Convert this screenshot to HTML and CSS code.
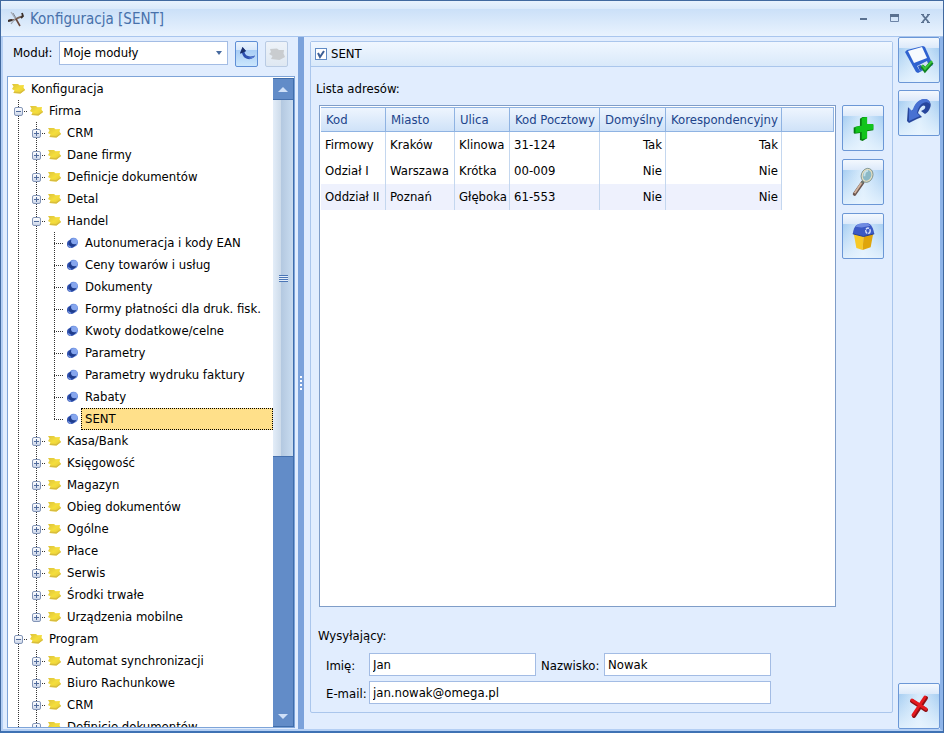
FILE: index.html
```html
<!DOCTYPE html>
<html lang="pl">
<head>
    <meta charset="UTF-8">
    <meta name="viewport" content="width=device-width, initial-scale=1.0">
    <title>Konfiguracja [SENT]</title>
    <link rel="stylesheet" href="styles.css">
</head>
<body>
    <!-- Shared icons -->
    <svg class="sprite" aria-hidden="true">
        <defs>
            <linearGradient id="gold" x1="0" y1="0" x2="1" y2="1">
                <stop offset="0" stop-color="#dcc23c"/>
                <stop offset="0.5" stop-color="#f5de3c"/>
                <stop offset="1" stop-color="#e3c93a"/>
            </linearGradient>
        </defs>
        <symbol id="folder" viewBox="0 0 13 12">
            <path d="M0 1 L6 1 L7.500 2.200 L12 2 L11.500 4.500 L13 7 L8.500 10.500 L1.500 10 L2.500 7.500 L0 6 L1.500 3.500Z" fill="url(#gold)"/>
            <path d="M1.500 10 L8.500 10.500 L13 7 L12.500 6.300 L8 9 L2.200 8.600Z" fill="#d8bd3e"/>
        </symbol>
        <symbol id="leaf" viewBox="0 0 13 12">
            <ellipse cx="7.500" cy="5.200" rx="4.500" ry="4.500" fill="#6488da"/>
            <ellipse cx="5" cy="7" rx="4" ry="4" fill="#2d4fae"/>
            <ellipse cx="6.500" cy="6.300" rx="3.500" ry="3.300" fill="#1f3c8c"/>
            <ellipse cx="8.300" cy="4.200" rx="3.200" ry="3" fill="#86a6ee"/>
            <path d="M2 8.500 L5 10.500" stroke="#7d9de6" stroke-width="1.200"/>
        </symbol>
    </svg>

    <div class="window">
        <header class="titlebar">
            <svg class="app-icon" viewBox="0 0 16 16">
                <path d="M0 10 C3 8 5 10 8 8 S13 6 15 5" fill="none" stroke="#7a6459" stroke-width="1.800"/>
                <path d="M0 10 L4 9" stroke="#3a2e2a" stroke-width="2"/>
                <path d="M3 1 L7 7" stroke="#a5abb6" stroke-width="1.300"/>
                <path d="M5 2 L8 7" stroke="#7f8794" stroke-width="1"/>
                <path d="M8 8 L12 15" stroke="#6a473b" stroke-width="1.600"/>
                <path d="M7 8 L3 13" stroke="#9aa2ae" stroke-width="1.200"/>
                <path d="M14 2 L15 5 L13 7" fill="none" stroke="#3b2f2b" stroke-width="1.800"/>
            </svg>
            <h1>Konfiguracja [SENT]</h1>
            <div class="window-buttons">
                <button type="button" aria-label="Minimalizuj">
                    <svg viewBox="0 0 9 9"><path d="M1 5H8" stroke="#5a7190" stroke-width="2"/></svg>
                </button>
                <button type="button" aria-label="Maksymalizuj">
                    <svg viewBox="0 0 9 9"><path d="M0.5 1V7.5H8.5V1" fill="none" stroke="#6d84a6"/><path d="M0 1.500H9" stroke="#5a7190" stroke-width="3"/></svg>
                </button>
                <button type="button" aria-label="Zamknij okno">
                    <svg viewBox="0 0 9 9"><path d="M1.5 1L7.5 8M7.5 1L1.5 8" stroke="#5a7190" stroke-width="1.800"/><path d="M0 0.5H3M6 0.5H9M0 8.5H3M6 8.5H9" stroke="#5a7190"/></svg>
                </button>
            </div>
        </header>

        <div class="client">
            <aside class="sidebar">
                <div class="module-bar">
                    <label for="module">Moduł:</label>
                    <select id="module">
                        <option>Moje moduły</option>
                    </select>
                    <button type="button" class="small-button" aria-label="Cofnij">
                        <svg viewBox="0 0 18 18">
                            <path d="M4.500 2 L8 6 L6.500 7 C7 11 11 12.500 17 10.500 C16 15 6 16.500 4 8 L2 8.500Z" fill="#2d4fae"/>
                            <path d="M4.500 2 L8 6 L6 7 L4 8 L2 8.500Z" fill="#1c2f68"/>
                            <path d="M7 11 C10 13.500 13 13 17 10.500 C16 12.500 14 13.500 12 13.800Z" fill="#5c82da"/>
                        </svg>
                    </button>
                    <button type="button" class="small-button disabled" aria-label="Otwórz" disabled>
                        <svg viewBox="0 0 18 18"><path d="M2 4 L9 3.500 L11 5 L16 5 L15.500 8.500 L17 12 L11.500 15 L3 14 L4.500 11 L1 9 L3 7Z" fill="#c9cccf"/></svg>
                    </button>
                </div>

                <div class="tree-box">
                    <nav class="tree">
                        <div class="row root"><svg class="node"><use href="#folder"/></svg><span class="text">Konfiguracja</span></div>
                        <ul class="top">
                            <li class="through">
                                <div class="row"><i class="box minus"></i><svg class="node"><use href="#folder"/></svg><span class="text">Firma</span></div>
                                <ul>
                                    <li><div class="row"><i class="box"></i><svg class="node"><use href="#folder"/></svg><span class="text">CRM</span></div></li>
                                    <li><div class="row"><i class="box"></i><svg class="node"><use href="#folder"/></svg><span class="text">Dane firmy</span></div></li>
                                    <li><div class="row"><i class="box"></i><svg class="node"><use href="#folder"/></svg><span class="text">Definicje dokumentów</span></div></li>
                                    <li><div class="row"><i class="box"></i><svg class="node"><use href="#folder"/></svg><span class="text">Detal</span></div></li>
                                    <li>
                                        <div class="row"><i class="box minus"></i><svg class="node"><use href="#folder"/></svg><span class="text">Handel</span></div>
                                        <ul>
                                            <li><div class="row"><i class="dots"></i><svg class="node"><use href="#leaf"/></svg><span class="text">Autonumeracja i kody EAN</span></div></li>
                                            <li><div class="row"><i class="dots"></i><svg class="node"><use href="#leaf"/></svg><span class="text">Ceny towarów i usług</span></div></li>
                                            <li><div class="row"><i class="dots"></i><svg class="node"><use href="#leaf"/></svg><span class="text">Dokumenty</span></div></li>
                                            <li><div class="row"><i class="dots"></i><svg class="node"><use href="#leaf"/></svg><span class="text">Formy płatności dla druk. fisk.</span></div></li>
                                            <li><div class="row"><i class="dots"></i><svg class="node"><use href="#leaf"/></svg><span class="text">Kwoty dodatkowe/celne</span></div></li>
                                            <li><div class="row"><i class="dots"></i><svg class="node"><use href="#leaf"/></svg><span class="text">Parametry</span></div></li>
                                            <li><div class="row"><i class="dots"></i><svg class="node"><use href="#leaf"/></svg><span class="text">Parametry wydruku faktury</span></div></li>
                                            <li><div class="row"><i class="dots"></i><svg class="node"><use href="#leaf"/></svg><span class="text">Rabaty</span></div></li>
                                            <li><div class="row"><i class="dots"></i><svg class="node"><use href="#leaf"/></svg><span class="text selected">SENT</span></div></li>
                                        </ul>
                                    </li>
                                    <li><div class="row"><i class="box"></i><svg class="node"><use href="#folder"/></svg><span class="text">Kasa/Bank</span></div></li>
                                    <li><div class="row"><i class="box"></i><svg class="node"><use href="#folder"/></svg><span class="text">Księgowość</span></div></li>
                                    <li><div class="row"><i class="box"></i><svg class="node"><use href="#folder"/></svg><span class="text">Magazyn</span></div></li>
                                    <li><div class="row"><i class="box"></i><svg class="node"><use href="#folder"/></svg><span class="text">Obieg dokumentów</span></div></li>
                                    <li><div class="row"><i class="box"></i><svg class="node"><use href="#folder"/></svg><span class="text">Ogólne</span></div></li>
                                    <li><div class="row"><i class="box"></i><svg class="node"><use href="#folder"/></svg><span class="text">Płace</span></div></li>
                                    <li><div class="row"><i class="box"></i><svg class="node"><use href="#folder"/></svg><span class="text">Serwis</span></div></li>
                                    <li><div class="row"><i class="box"></i><svg class="node"><use href="#folder"/></svg><span class="text">Środki trwałe</span></div></li>
                                    <li><div class="row"><i class="box"></i><svg class="node"><use href="#folder"/></svg><span class="text">Urządzenia mobilne</span></div></li>
                                </ul>
                            </li>
                            <li class="through">
                                <div class="row"><i class="box minus"></i><svg class="node"><use href="#folder"/></svg><span class="text">Program</span></div>
                                <ul>
                                    <li><div class="row"><i class="box"></i><svg class="node"><use href="#folder"/></svg><span class="text">Automat synchronizacji</span></div></li>
                                    <li><div class="row"><i class="box"></i><svg class="node"><use href="#folder"/></svg><span class="text">Biuro Rachunkowe</span></div></li>
                                    <li><div class="row"><i class="box"></i><svg class="node"><use href="#folder"/></svg><span class="text">CRM</span></div></li>
                                    <li><div class="row"><i class="box"></i><svg class="node"><use href="#folder"/></svg><span class="text">Definicje dokumentów</span></div></li>
                                </ul>
                            </li>
                        </ul>
                    </nav>
                    <div class="scrollbar">
                        <button type="button" aria-label="W górę"><svg viewBox="0 0 10 5"><path d="M0 5L5 0L10 5Z" fill="#cfe0f8"/></svg></button>
                        <div class="track"><div class="thumb"><i class="grip"></i></div></div>
                        <button type="button" aria-label="W dół"><svg viewBox="0 0 10 5"><path d="M0 0L5 5L10 0Z" fill="#cfe0f8"/></svg></button>
                    </div>
                </div>
            </aside>

            <div class="splitter"><i></i><i></i><i></i><i></i></div>

            <main class="panel">
                <div class="panel-head">
                    <input type="checkbox" id="sent" checked>
                    <label for="sent">SENT</label>
                </div>
                <div class="panel-body">
                    <p class="caption">Lista adresów:</p>
                    <div class="addresses">
                        <div class="grid">
                            <table>
                                <colgroup>
                                    <col class="c-code"><col class="c-city"><col class="c-street"><col class="c-zip"><col class="c-default"><col class="c-mail"><col>
                                </colgroup>
                                <thead>
                                    <tr><th>Kod</th><th>Miasto</th><th>Ulica</th><th>Kod Pocztowy</th><th>Domyślny</th><th>Korespondencyjny</th><th></th></tr>
                                </thead>
                                <tbody>
                                    <tr><td>Firmowy</td><td>Kraków</td><td>Klinowa</td><td>31-124</td><td class="flag">Tak</td><td class="flag">Tak</td><td></td></tr>
                                    <tr><td>Odział I</td><td>Warszawa</td><td>Krótka</td><td>00-009</td><td class="flag">Nie</td><td class="flag">Nie</td><td></td></tr>
                                    <tr class="current"><td>Oddział II</td><td>Poznań</td><td>Głęboka</td><td>61-553</td><td class="flag">Nie</td><td class="flag">Nie</td><td></td></tr>
                                </tbody>
                            </table>
                        </div>
                        <div class="actions">
                            <button type="button" class="tool" aria-label="Dodaj">
                                <svg viewBox="0 0 28 28">
                                    <path d="M10 3L13 1L18 1L18 9L24 9L25 10L25 16L18 17L18 25L13 28L10 27L10 19L4 20L3 19L3 13L10 11Z" fill="#087c12"/>
                                    <path d="M12 2L18 1L18 9L25 9L25 15L18 16L18 25L12 26L12 18L5 19L5 12L12 11Z" fill="#12c41c"/>
                                </svg>
                            </button>
                            <button type="button" class="tool" aria-label="Podgląd">
                                <svg viewBox="0 0 28 28">
                                    <path d="M4 27L13 14" stroke="#6b5650" stroke-width="4" stroke-linecap="round"/>
                                    <path d="M4 26L12 14" stroke="#d3b49f" stroke-width="2"/>
                                    <path d="M12 15L15 11" stroke="#6e7a72" stroke-width="2"/>
                                    <ellipse cx="18" cy="6" rx="5.500" ry="7" transform="rotate(20 18 6)" fill="#8bb9c6" stroke="#e3ddc0" stroke-width="1.800"/>
                                    <ellipse cx="18" cy="6" rx="6.500" ry="8" transform="rotate(20 18 6)" fill="none" stroke="#6d8580" stroke-width="0.800"/>
                                    <path d="M15 7C15 3 17 1 19 1" fill="none" stroke="#c6e2ea" stroke-width="2"/>
                                </svg>
                            </button>
                            <button type="button" class="tool" aria-label="Usuń">
                                <svg viewBox="0 0 28 28">
                                    <path d="M3 10L14 13L13 29L6 27Z" fill="#f7c927"/>
                                    <path d="M14 13L25 10L22 26L13 29Z" fill="#dfa50c"/>
                                    <path d="M2 11C3 4 5 1 9 0L18 -1C23 0 25 5 26 11L14 14Z" fill="#3b59c4"/>
                                    <path d="M5 3C7 0 10 -1 18 -1L22 2L12 4Z" fill="#6f8be2"/>
                                    <path d="M2 11L14 14L26 11" fill="none" stroke="#22398f"/>
                                    <ellipse cx="19" cy="7.500" rx="2.500" ry="3" fill="none" stroke="#dde6ff" stroke-width="1.500" stroke-dasharray="4 1"/>
                                </svg>
                            </button>
                        </div>
                    </div>

                    <p class="caption sender-caption">Wysyłający:</p>
                    <form class="sender">
                        <label for="first-name">Imię:</label>
                        <input type="text" id="first-name" value="Jan">
                        <label for="last-name">Nazwisko:</label>
                        <input type="text" id="last-name" value="Nowak">
                        <label for="email">E-mail:</label>
                        <input type="text" id="email" class="wide" value="jan.nowak@omega.pl">
                    </form>
                </div>
            </main>

            <div class="side-tools">
                <button type="button" class="tool" aria-label="Zapisz">
                    <svg viewBox="0 0 28 28">
                        <path d="M0 6L2 4L18 0L20 1L28 19L13 27L11 26Z" fill="#2f62d0"/>
                        <path d="M3 5L17 1L22 12L9 17Z" fill="#f6fafe"/>
                        <path d="M12 20L22 15L24 20L15 25Z" fill="#d3e2f5"/>
                        <path d="M13 20L16 19L18 23L15 25Z" fill="#2a55b9"/>
                        <path d="M17 20L20 24L27 16" fill="none" stroke="#108321" stroke-width="4"/>
                        <path d="M17 19L20 23L27 15" fill="none" stroke="#38c63d" stroke-width="2"/>
                    </svg>
                </button>
                <button type="button" class="tool" aria-label="Przywróć">
                    <svg viewBox="0 0 28 28">
                        <path d="M9 10C11 3 16 0 20 0C25 1 27 5 25 9C24 12 22 14 20 15L16 12C19 11 21 9 20 7C18 5 15 8 13 14L17 18L12 20L4 24L2 22L3 8L6 12Z" fill="#27469c"/>
                        <path d="M8 10C11 2 16 0 20 0C23 0 25 2 25 5C21 1 14 4 12 14L15 17L4 22L4 9L7 12Z" fill="#4871d2"/>
                    </svg>
                </button>
                <button type="button" class="tool close" aria-label="Zamknij">
                    <svg viewBox="0 0 28 28">
                        <path d="M7 9L21 18M21 6L9 24" stroke="#8e1014" stroke-width="4" stroke-linecap="round"/>
                        <path d="M7 8L21 17M20 5L8 23" stroke="#e5191e" stroke-width="3" stroke-linecap="round"/>
                    </svg>
                </button>
            </div>
        </div>
    </div>
</body>
</html>
```
FILE: styles.css
```css
* {
    box-sizing: border-box;
}

body {
    margin: 0;
    font-family: "DejaVu Sans Condensed", Tahoma, "DejaVu Sans", sans-serif;
    font-size: 13px;
    line-height: 16px;
    color: #000;
}

button, input, select {
    font: inherit;
    color: inherit;
    margin: 0;
}

.sprite {
    position: absolute;
    width: 0;
    height: 0;
}

.window {
    height: 100vh;
    display: flex;
    flex-direction: column;
    background: #e1edfe;
    border: 1px solid #41699f;
    border-bottom: 2px solid #3f72b4;
}

/* Title bar */
.titlebar {
    height: 36px;
    flex: none;
    display: flex;
    align-items: center;
    gap: 6px;
    padding: 0 13px 0 7px;
    background: linear-gradient(to bottom, #e8f2fd 0, #dae9fa 8px, #cbe0f8 8px, #e9f3fe 100%);
    border-bottom: 1px solid #a9c6ee;
}

.titlebar h1 {
    margin: 0;
    font-size: 15px;
    font-weight: normal;
    color: #4771ab;
}

.app-icon {
    width: 16px;
    height: 16px;
}

.window-buttons {
    margin-left: auto;
    display: flex;
    gap: 22px;
}

.window-buttons button {
    width: 9px;
    height: 16px;
    padding: 0;
    border: 0;
    background: none;
    display: flex;
    align-items: center;
}

.window-buttons svg {
    width: 9px;
    height: 9px;
}

.client {
    flex: 1;
    min-height: 0;
    display: flex;
    border-left: 2px solid #b4cff4;
    border-right: 3px solid #8fb5e9;
    border-bottom: 2px solid #b4cff4;
}

/* Left side */
.sidebar {
    width: 295px;
    flex: none;
    display: flex;
    flex-direction: column;
    padding: 4px 3px 1px 4px;
    min-height: 0;
}

.module-bar {
    display: flex;
    align-items: flex-start;
    gap: 7px;
    height: 35px;
    padding: 0 7px 0 6px;
}

.module-bar label {
    padding-top: 4px;
}

.module-bar select {
    flex: 1;
    min-width: 0;
    height: 24px;
    padding: 0 3px;
    appearance: none;
    border: 1px solid #a3bce4;
    border-radius: 0;
    background: #fff url("data:image/svg+xml,%3Csvg xmlns='http://www.w3.org/2000/svg' viewBox='0 0 6 4'%3E%3Cpath d='M0 0H6L3 4Z' fill='%23466a9f'/%3E%3C/svg%3E") no-repeat right 5px center / 6px 4px;
}

.small-button {
    width: 23px;
    height: 26px;
    padding: 0;
    display: flex;
    align-items: center;
    justify-content: center;
    border: 1px solid #5f8fd6;
    border-radius: 2px;
    background: linear-gradient(to bottom, #eaf3fd 0, #d6e7fa 35%, #a9cdf5 35%, #cbe6fc 100%);
}

.small-button.disabled {
    border-color: #b9cbe4;
    background: linear-gradient(to bottom, #eef3f9, #dfe8f2);
}

.small-button svg {
    width: 18px;
    height: 18px;
}

/* Tree */
.tree-box {
    flex: 1;
    min-height: 0;
    display: flex;
    background: #fff;
    border: 1px solid #7ea4d8;
    padding-top: 1px;
}

.tree {
    flex: 1;
    min-width: 0;
    overflow: hidden;
}

.tree ul {
    list-style: none;
    margin: 0;
    padding: 0 0 0 18px;
}

.tree ul.top {
    padding-left: 10px;
}

/* dotted connector running down the left edge of each branch */
.tree li {
    background: repeating-linear-gradient(to bottom, #333 0 1px, transparent 1px 2px) no-repeat 0 0 / 1px 100%;
}

.tree li:last-child:not(.through) {
    background-size: 1px 11px;
}

.row {
    display: flex;
    align-items: center;
    height: 22px;
}

.row.root {
    padding-left: 4px;
}

.box {
    flex: none;
    width: 9px;
    height: 9px;
    margin: 0 7px 0 -4px;
    border: 1px solid #8496b8;
    border-radius: 2px;
    background:
        linear-gradient(#526c9c, #526c9c) no-repeat center / 5px 1px,
        linear-gradient(#526c9c, #526c9c) no-repeat center / 1px 5px,
        linear-gradient(#fff, #cdd7ea);
}

.box.minus {
    background:
        linear-gradient(#526c9c, #526c9c) no-repeat center / 5px 1px,
        linear-gradient(#fff, #cdd7ea);
}

.box::after {
    content: "";
    display: block;
    width: 4px;
    height: 1px;
    margin: 3px 0 0 9px;
    background: repeating-linear-gradient(to right, #333 0 1px, transparent 1px 2px);
}

.dots {
    flex: none;
    width: 9px;
    height: 1px;
    margin-right: 3px;
    background: repeating-linear-gradient(to right, #333 0 1px, transparent 1px 2px);
}

.node {
    flex: none;
    width: 13px;
    height: 12px;
    margin-right: 2px;
}

.text {
    height: 22px;
    padding: 2px 3px;
    border: 1px solid transparent;
    white-space: nowrap;
}

.text.selected {
    flex: 1;
    background: #ffe08a;
    border: 1px dotted #000;
}

/* Scrollbar */
.scrollbar {
    width: 21px;
    flex: none;
    display: flex;
    flex-direction: column;
    background: #628cc8;
    border: 1px solid #3f6dab;
    border-width: 1px 1px 1px 0;
}

.scrollbar button {
    height: 20px;
    padding: 0;
    display: flex;
    align-items: center;
    justify-content: center;
    border: 0;
    background: #628cc8;
}

.scrollbar svg {
    width: 10px;
    height: 5px;
}

.track {
    flex: 1;
    min-height: 0;
}

.thumb {
    height: 59%;
    display: flex;
    align-items: center;
    justify-content: center;
    border: 1px solid #4570ae;
    border-width: 1px 0;
    background: linear-gradient(to right, #e3edf8 0, #cddbea 40%, #b3c8e0 40%, #c9dcf0 100%);
}

.grip {
    width: 9px;
    height: 7px;
    background: repeating-linear-gradient(to bottom, #4b76b6 0 1px, #e4eefa 1px 2px);
}

.splitter {
    width: 6px;
    flex: none;
    display: flex;
    flex-direction: column;
    align-items: center;
    justify-content: center;
    gap: 2px;
    background: #7ba2db;
}

.splitter i {
    width: 2px;
    height: 2px;
    background: #fff;
}

/* Main panel */
.panel {
    flex: 1;
    min-width: 0;
    display: flex;
    flex-direction: column;
    margin: 4px 5px 16px 6px;
    border: 1px solid #aac6ec;
    border-radius: 2px;
}

.panel-head {
    height: 25px;
    flex: none;
    display: flex;
    align-items: center;
    gap: 4px;
    padding: 0 4px;
    background: linear-gradient(to bottom, #f0f7ff, #d9e9fa);
    border-bottom: 1px solid #aac6ec;
}

.panel-head input {
    appearance: none;
    width: 12px;
    height: 12px;
    border: 1px solid #5f8ac4;
    background: #fff url("data:image/svg+xml,%3Csvg xmlns='http://www.w3.org/2000/svg' viewBox='0 0 10 10'%3E%3Cpath d='M2 4L4 8L8 2' fill='none' stroke='%233c5f96' stroke-width='2'/%3E%3C/svg%3E") no-repeat center / 10px 10px;
}

.panel-body {
    flex: 1;
    min-height: 0;
    display: flex;
    flex-direction: column;
    padding: 14px 8px 8px 8px;
}

.caption {
    margin: 0 0 8px -3px;
}

.addresses {
    flex: 1;
    min-height: 0;
    display: flex;
    gap: 6px;
}

.grid {
    flex: 1;
    min-width: 0;
    padding: 1px;
    background: #fff;
    border: 1px solid #7f9dc8;
}

.grid table {
    width: 100%;
    table-layout: fixed;
    border-collapse: separate;
    border-spacing: 0;
    white-space: nowrap;
}

.c-code { width: 65px; }
.c-city { width: 69px; }
.c-street { width: 55px; }
.c-zip { width: 90px; }
.c-default { width: 66px; }
.c-mail { width: 116px; }

.grid th {
    height: 25px;
    padding: 0 0 0 5px;
    text-align: left;
    font-weight: normal;
    color: #21448b;
    background: linear-gradient(to bottom, #eef5fe, #cfe2f8);
    border: 1px solid #8fb3e2;
    border-width: 1px 1px 1px 0;
}

.grid td {
    height: 26px;
    padding: 0 3px 0 4px;
    border-right: 1px solid #c4d7ef;
}

.grid td:last-child {
    border-right: 0;
}

.grid .flag {
    text-align: right;
}

.grid .current td:not(:last-child) {
    background: #eef1fd;
}

.actions {
    display: flex;
    flex-direction: column;
    gap: 8px;
}

/* Large icon buttons */
.tool {
    width: 42px;
    height: 46px;
    flex: none;
    padding: 0;
    display: flex;
    align-items: center;
    justify-content: center;
    border: 1px solid #6b97d6;
    border-radius: 2px;
    background:
        linear-gradient(to bottom, #f3f8fe 0, #dce9fa 10px, transparent 10px),
        linear-gradient(to bottom, transparent 25%, rgba(235, 246, 255, 0.8) 100%),
        linear-gradient(to right, #a9cff2, #d9ecfc 50%, #a9cff2);
}

.tool svg {
    width: 28px;
    height: 28px;
    overflow: visible;
}

.actions .tool svg {
    width: 25px;
    height: 27px;
}

.side-tools {
    width: 42px;
    flex: none;
    display: flex;
    flex-direction: column;
    gap: 7px;
}

.side-tools .close {
    margin-top: auto;
}

/* Sender form */
.caption.sender-caption {
    margin: 21px 0 9px -1px;
}

.sender {
    display: grid;
    grid-template-columns: 38px minmax(0, 167px) 58px minmax(0, 167px);
    column-gap: 5px;
    row-gap: 5px;
    align-items: center;
    padding-left: 7px;
}

.sender label {
    padding-top: 2px;
    white-space: nowrap;
}

.sender input {
    width: 100%;
    height: 23px;
    padding: 0 3px;
    border: 1px solid #a3bce4;
    background: #fff;
}

.sender .wide {
    grid-column: span 3;
}
```
